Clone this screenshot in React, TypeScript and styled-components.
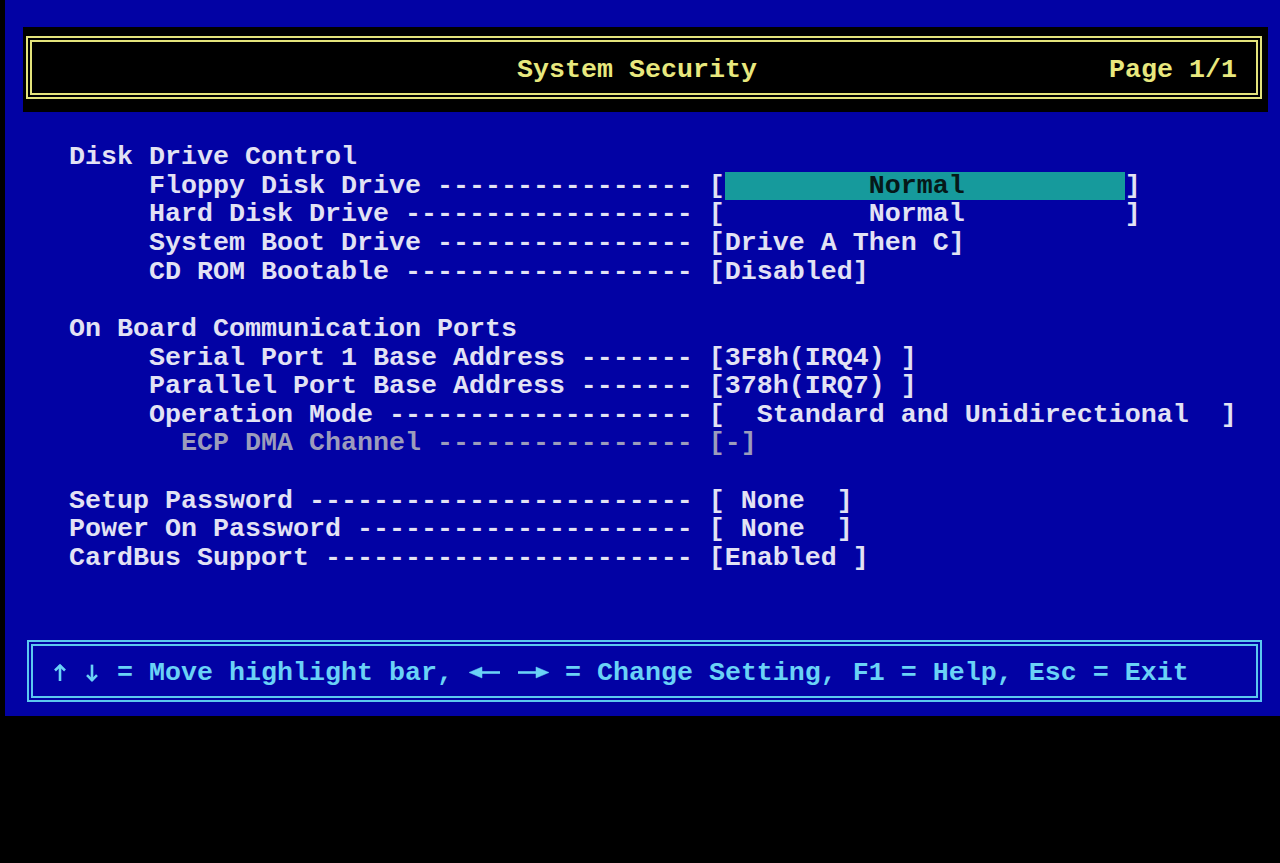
import React from "react";
import styled, { createGlobalStyle } from "styled-components";

// text-mode metrics: 80 columns x 25 rows
const ROW_H = 28.64;

type SettingRow =
  | { kind: "blank" }
  | { kind: "heading"; label: string }
  | {
      kind: "item";
      indent: number;
      label: string;
      value: string;
      selected?: boolean;
      dim?: boolean;
    };

const rows: SettingRow[] = [
  { kind: "heading", label: "Disk Drive Control" },
  { kind: "item", indent: 9, label: "Floppy Disk Drive", value: "[         Normal          ]", selected: true },
  { kind: "item", indent: 9, label: "Hard Disk Drive", value: "[         Normal          ]" },
  { kind: "item", indent: 9, label: "System Boot Drive", value: "[Drive A Then C]" },
  { kind: "item", indent: 9, label: "CD ROM Bootable", value: "[Disabled]" },
  { kind: "blank" },
  { kind: "heading", label: "On Board Communication Ports" },
  { kind: "item", indent: 9, label: "Serial Port 1 Base Address", value: "[3F8h(IRQ4) ]" },
  { kind: "item", indent: 9, label: "Parallel Port Base Address", value: "[378h(IRQ7) ]" },
  { kind: "item", indent: 9, label: "Operation Mode", value: "[  Standard and Unidirectional  ]" },
  { kind: "item", indent: 11, label: "ECP DMA Channel", value: "[-]", dim: true },
  { kind: "blank" },
  { kind: "item", indent: 4, label: "Setup Password", value: "[ None  ]" },
  { kind: "item", indent: 4, label: "Power On Password", value: "[ None  ]" },
  { kind: "item", indent: 4, label: "CardBus Support", value: "[Enabled ]" },
];

// label, leader dashes up to column 42, value from column 44
const leader = (indent: number, label: string) =>
  " ".repeat(indent) + label + " " + "-".repeat(42 - indent - label.length) + " ";

const GlobalStyle = createGlobalStyle`
  html, body {
    margin: 0;
    padding: 0;
    background: #000;
  }
`;

const Screen = styled.div`
  width: 1275px;
  height: 716px;
  margin-left: 5px;
  background: #0202a4;
  display: flex;
  flex-direction: column;
  font-family: "Liberation Mono", "DejaVu Sans Mono", monospace;
  font-weight: 700;
  font-size: 26.66px;
  line-height: ${ROW_H}px;
  color: #e2e2f4;
`;

const TitleBar = styled.div`
  margin: 27px 12px 0 18px;
  padding: 9px 6px 13px 3px;
  background: #000;
`;

const TitleFrame = styled.div`
  box-sizing: border-box;
  height: 63px;
  border: 6px double #e4e47c;
  display: flex;
  align-items: center;
  padding: 5px 19px 0 485px;
  color: #e8e87e;
  white-space: pre;
`;

const PageNo = styled.span`
  margin-left: auto;
`;

const Settings = styled.div`
  margin-top: 31.2px;
  display: flex;
  flex-direction: column;
`;

const Row = styled.div<{ $dim?: boolean }>`
  display: flex;
  height: ${ROW_H}px;
  white-space: pre;
  color: ${(p) => (p.$dim ? "#9c9cbc" : "#e2e2f4")};
`;

const Highlight = styled.span`
  background: #169a9c;
  color: #061818;
`;

const Footer = styled.div`
  box-sizing: border-box;
  height: 62px;
  margin: auto 18px 14px 22px;
  border: 6px double #5cc8f0;
  display: flex;
  align-items: center;
  padding: 4px 0 0 20px;
  color: #6ad2f6;
`;

const HelpLine = styled.span`
  white-space: pre;
`;

const Glyph = styled.svg`
  display: inline-block;
  vertical-align: top;
  height: ${ROW_H}px;
`;

type ArrowDir = "up" | "down" | "left" | "right";

const Arrow = ({ dir }: { dir: ArrowDir }) => {
  const stroke = "#6ad2f6";
  if (dir === "up" || dir === "down") {
    const flip = dir === "down" ? `scale(1,-1) translate(0,-${ROW_H - 1})` : undefined;
    return (
      <Glyph width={16} viewBox={`0 0 16 ${ROW_H}`}>
        <g transform={flip} fill="none" stroke={stroke} strokeWidth={2.6}>
          <line x1={7} y1={6} x2={7} y2={22} />
          <polyline points="2,11.5 7,6.5 12,11.5" />
        </g>
      </Glyph>
    );
  }
  const flip = dir === "right" ? "scale(-1,1) translate(-32,0)" : undefined;
  return (
    <Glyph width={32} viewBox={`0 0 32 ${ROW_H}`}>
      <g transform={flip} fill={stroke} stroke={stroke}>
        <polygon points="0,13.5 13,8 13,19" strokeWidth={0.5} />
        <line x1={11} y1={13.5} x2={31} y2={13.5} strokeWidth={2.6} />
      </g>
    </Glyph>
  );
};

const SettingLine = ({ row }: { row: SettingRow }) => {
  if (row.kind === "blank") return <Row> </Row>;
  if (row.kind === "heading") return <Row>{"    " + row.label}</Row>;

  const lead = leader(row.indent, row.label);
  if (!row.selected) {
    return (
      <Row $dim={row.dim}>
        <span>{lead}</span>
        <span>{row.value}</span>
      </Row>
    );
  }
  return (
    <Row>
      <span>{lead + row.value.slice(0, 1)}</span>
      <Highlight>{row.value.slice(1, -1)}</Highlight>
      <span>{row.value.slice(-1)}</span>
    </Row>
  );
};

export default function App() {
  return (
    <>
      <GlobalStyle />
      <Screen>
        <TitleBar>
          <TitleFrame>
            <span>System Security</span>
            <PageNo>Page 1/1</PageNo>
          </TitleFrame>
        </TitleBar>

        <Settings>
          {rows.map((row, i) => (
            <SettingLine key={i} row={row} />
          ))}
        </Settings>

        <Footer>
          <HelpLine>
            <Arrow dir="up" />
            {" "}
            <Arrow dir="down" />
            {" = Move highlight bar, "}
            <Arrow dir="left" />
            {" "}
            <Arrow dir="right" />
            {" = Change Setting, F1 = Help, Esc = Exit"}
          </HelpLine>
        </Footer>
      </Screen>
    </>
  );
}
